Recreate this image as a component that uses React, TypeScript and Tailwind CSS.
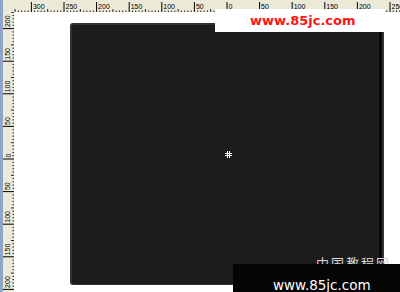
import React from 'react';

const STEP = 3.26; // px per 5 units on both rulers
const TOP_ZERO = 227;
const LEFT_ZERO = 159;
const rulerFont = "'Liberation Sans', Arial, sans-serif";

const TopRuler: React.FC = () => {
  const ticks: React.ReactNode[] = [];
  for (let i = -75; i <= 55; i++) {
    const x = TOP_ZERO + i * STEP;
    if (x < 13 || x > 400) continue;
    if (i % 10 === 0) {
      ticks.push(<line key={i} x1={x} y1={2} x2={x} y2={12} stroke="#000" strokeWidth={1} />);
      ticks.push(
        <text key={`t${i}`} x={x + 1.5} y={8.5} fontSize={7} fontFamily={rulerFont} fill="#000">
          {(Math.abs(i) / 10) * 50}
        </text>
      );
    } else {
      const h = i % 5 === 0 ? 3 : 1.5;
      ticks.push(<line key={i} x1={x} y1={12 - h} x2={x} y2={12} stroke="#222" strokeWidth={1} />);
    }
  }
  return (
    <svg width={397} height={12} viewBox="3 0 397 12" className="block shrink-0 bg-[#ece9d8]">
      {ticks}
    </svg>
  );
};

const LeftRuler: React.FC = () => {
  const ticks: React.ReactNode[] = [];
  for (let i = -50; i <= 45; i++) {
    const y = LEFT_ZERO + i * STEP;
    if (y < 12 || y > 292) continue;
    if (i % 10 === 0) {
      ticks.push(<line key={i} x1={3} y1={y} x2={14} y2={y} stroke="#000" strokeWidth={1} />);
      ticks.push(
        <text
          key={`t${i}`}
          x={10.5}
          y={y - 1.5}
          fontSize={7}
          fontFamily={rulerFont}
          fill="#000"
          transform={`rotate(-90 10.5 ${y - 1.5})`}
        >
          {(Math.abs(i) / 10) * 50}
        </text>
      );
    } else {
      const w = i % 5 === 0 ? 3 : 1.5;
      ticks.push(<line key={i} x1={14 - w} y1={y} x2={14} y2={y} stroke="#222" strokeWidth={1} />);
    }
  }
  return (
    <svg width={11} height={280} viewBox="3 12 11 280" className="block shrink-0 bg-[#ece9d8]">
      {ticks}
    </svg>
  );
};

export default function App() {
  return (
    <div className="relative w-[400px] h-[292px] overflow-hidden bg-white flex">
      <div className="w-[3px] h-full shrink-0 bg-[#8ea4c8]" />
      <div className="flex flex-col flex-1">
        <TopRuler />
        <div className="flex flex-1">
          <LeftRuler />
          <div className="flex-1 bg-white pl-[56px] pt-[11px]">
            <div className="w-[314px] h-[262px] rounded-[3px] bg-[#323232] pl-[2px] pt-[2px] pr-[2px] pb-[1px]">
              <div className="w-full h-full rounded-[2px] bg-[#1c1c1c] border-r-[3px] border-[#080808]" />
            </div>
          </div>
        </div>
      </div>

      {/* cursor */}
      <svg width={7} height={7} className="absolute left-[225px] top-[151px]">
        <line x1={2.5} y1={0} x2={2.5} y2={7} stroke="#fff" strokeWidth={1} />
        <line x1={4.5} y1={0} x2={4.5} y2={7} stroke="#fff" strokeWidth={1} />
        <line x1={0} y1={2.5} x2={7} y2={2.5} stroke="#fff" strokeWidth={1} />
        <line x1={0} y1={4.5} x2={7} y2={4.5} stroke="#fff" strokeWidth={1} />
      </svg>

      {/* top watermark */}
      <div className="absolute left-[215px] top-[9px] w-[170px] h-[23px] bg-white flex items-center pl-[35px]">
        <span className="text-[13px] font-bold leading-none text-[#ff1414] font-['DejaVu_Sans',Verdana,sans-serif]">
          www.85jc.com
        </span>
      </div>

      {/* bottom watermark */}
      <div className="absolute left-[316px] top-[256px] text-[13px] leading-none tracking-[2px] text-[#d8d8d8] font-['Noto_Sans_CJK_SC',sans-serif]">
        中国教程网
      </div>
      <div className="absolute left-[233px] top-[264px] w-[167px] h-[28px] bg-[#050505] pl-[40px] pt-[13px]">
        <span className="block text-[13.5px] leading-[16px] text-white font-['DejaVu_Sans',Verdana,sans-serif]">
          www.85jc.com
        </span>
      </div>
    </div>
  );
}
